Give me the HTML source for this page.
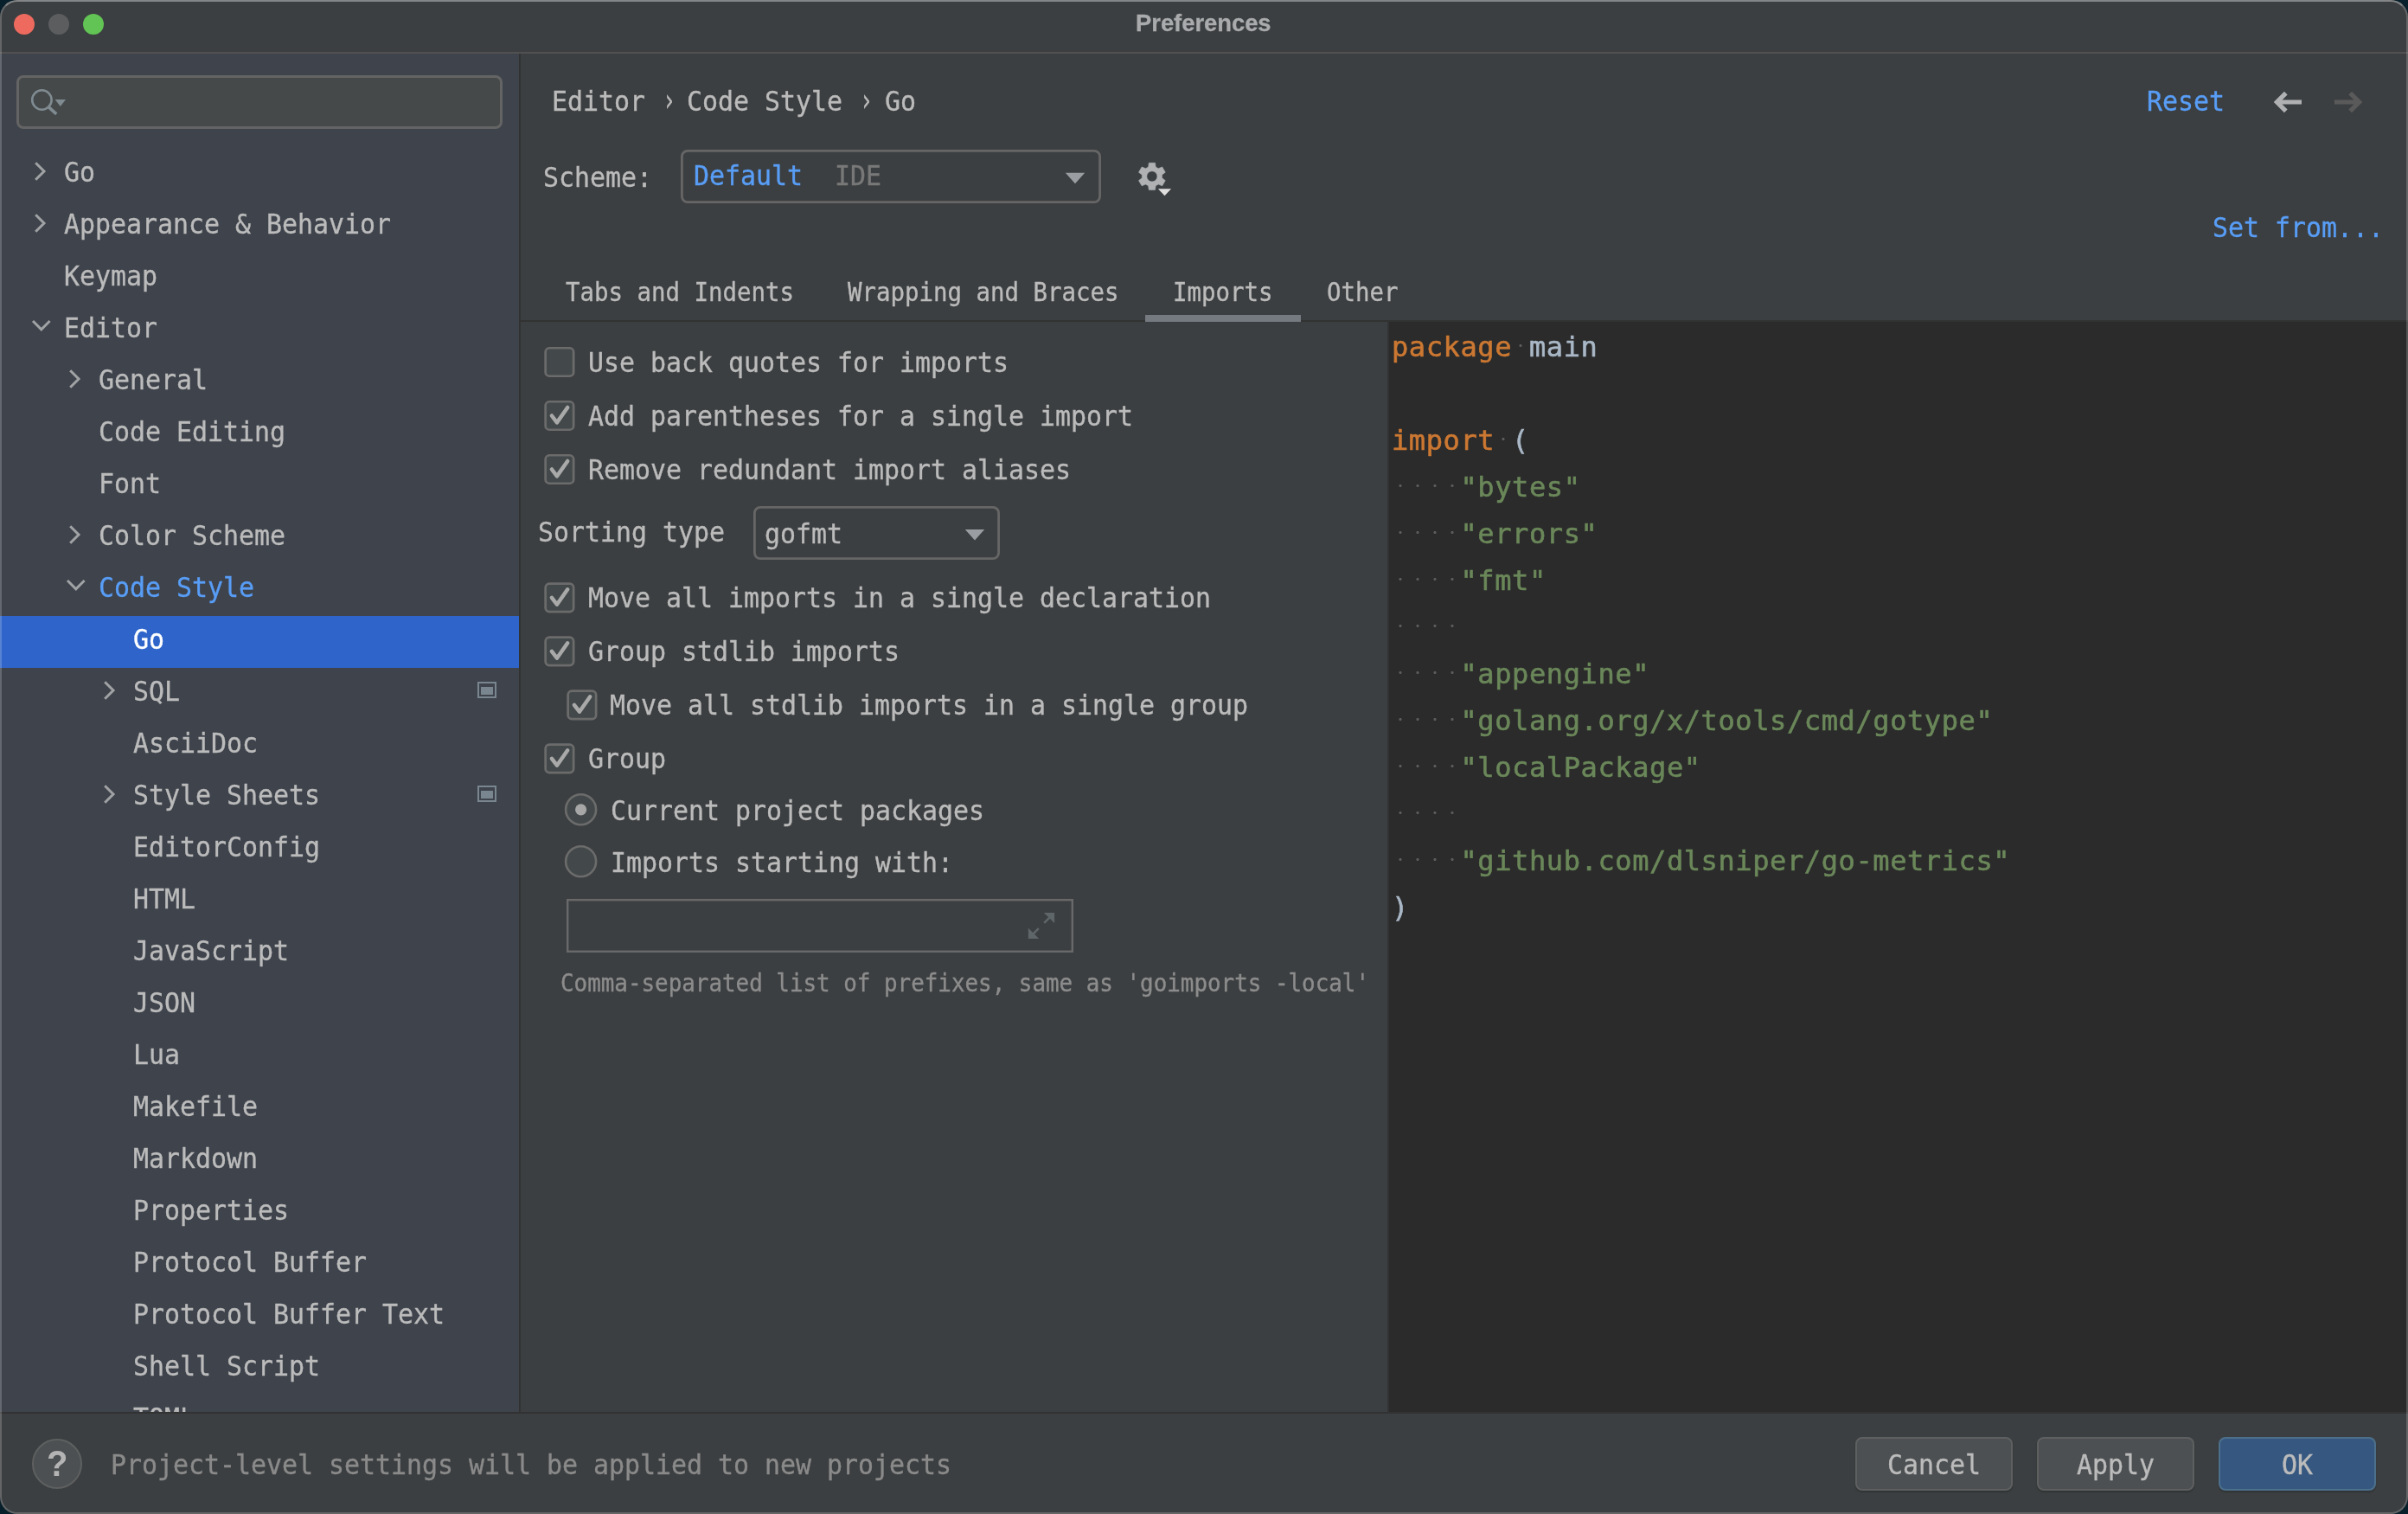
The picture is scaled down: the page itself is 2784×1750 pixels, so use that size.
<!DOCTYPE html>
<html lang="en"><head><meta charset="utf-8"><title>Preferences</title>
<style>
html,body{margin:0;padding:0;}
body{width:2784px;height:1750px;overflow:hidden;background:#08202b;position:relative;}
#win{will-change:transform;position:absolute;left:0;top:0;width:2784px;height:1750px;border-radius:20px;overflow:hidden;background:#3c3f41;}
#frame{position:absolute;left:0;top:0;width:2780px;height:1746px;border-radius:20px;border:2px solid rgba(255,255,255,.2);border-top-color:rgba(255,255,255,.37);border-bottom-color:rgba(255,255,255,.2);pointer-events:none;z-index:50;}
.abs{position:absolute;}
.u,.c{-webkit-text-stroke:0.35px currentColor;position:absolute;white-space:pre;line-height:1;transform-origin:0 0;font-family:"DejaVu Sans Mono","Liberation Mono",monospace;}
.c{transform:none;-webkit-text-stroke:0.6px currentColor;}
#title{position:absolute;left:0;top:0;width:2784px;height:60px;background:#3c3f41;}
#tsep{position:absolute;left:0;top:60px;width:2784px;height:2px;background:#515151;}
#side{position:absolute;left:0;top:62px;width:600px;height:1570px;background:#3e434c;overflow:hidden;}
#sdiv{position:absolute;left:600px;top:62px;width:2px;height:1570px;background:#323232;}
#code{position:absolute;left:1604px;top:372px;width:1180px;height:1260px;background:#2b2b2b;overflow:hidden;}
#bdiv{position:absolute;left:0;top:1632px;width:2784px;height:2px;background:#323232;}
.cb{position:absolute;width:29px;height:29px;border:3px solid #696969;border-radius:6px;background:#43494a;}
.rb{position:absolute;width:31.6px;height:31.6px;border:3px solid #696969;border-radius:50%;background:#43494a;}
.btn{position:absolute;top:1661px;width:178px;height:58px;border:2px solid #5e6060;border-radius:8px;background:#4c5052;box-shadow:0 2px 2px rgba(0,0,0,.18);}
.ws{color:transparent;background:radial-gradient(circle at 50% 46%,#5c5c5c 1.1px,rgba(92,92,92,0) 2px);}
</style></head><body>
<div id="win">
<div id="title"></div><div id="tsep"></div>

<div class="abs" style="left:15.8px;top:15.8px;width:24.2px;height:24.2px;border-radius:50%;background:#ee6a5e"></div>
<div class="abs" style="left:55.8px;top:15.8px;width:24.2px;height:24.2px;border-radius:50%;background:#5b5d5f"></div>
<div class="abs" style="left:95.9px;top:15.8px;width:24.2px;height:24.2px;border-radius:50%;background:#61c454"></div>
<span id="ttl" class="abs" style="left:1312.5px;top:11px;font:bold 27.6px/32px 'Liberation Sans',sans-serif;color:#a9abad;white-space:pre;transform-origin:0 0;transform:scaleX(.991);-webkit-text-stroke:.3px #a9abad;">Preferences</span>
<div id="side">
<div class="abs" style="left:19px;top:25px;width:556px;height:56px;border:3px solid #646464;border-radius:8px;background:#45494a"></div>
<svg class="abs" style="left:30px;top:36px" width="60" height="40" viewBox="30 98 60 40"><circle cx="48.4" cy="115.5" r="11.2" fill="none" stroke="#7f8b91" stroke-width="2.6"/><path d="M56.4 123.9L65.2 131.9" stroke="#7f8b91" stroke-width="3.6" fill="none"/><path d="M63.6 114.9h12.4l-6.2 8.1z" fill="#7f8b91"/></svg>
<span class="u" style="left:74.0px;top:121.4px;font-size:32.0px;color:#bbbbbb;transform:scaleX(0.9343);">Go</span>
<svg class="abs" style="left:36px;top:120px" width="24" height="32" viewBox="-4 -16 24 32"><path d="M1.2 -9.8L11 0L1.2 9.8" fill="none" stroke="#a0a2a4" stroke-width="3"/></svg>
<span class="u" style="left:74.0px;top:181.4px;font-size:32.0px;color:#bbbbbb;transform:scaleX(0.9343);">Appearance &amp; Behavior</span>
<svg class="abs" style="left:36px;top:180px" width="24" height="32" viewBox="-4 -16 24 32"><path d="M1.2 -9.8L11 0L1.2 9.8" fill="none" stroke="#a0a2a4" stroke-width="3"/></svg>
<span class="u" style="left:74.0px;top:241.4px;font-size:32.0px;color:#bbbbbb;transform:scaleX(0.9343);">Keymap</span>
<span class="u" style="left:74.0px;top:301.4px;font-size:32.0px;color:#bbbbbb;transform:scaleX(0.9343);">Editor</span>
<svg class="abs" style="left:32px;top:302px" width="32" height="24" viewBox="-8 -12 32 24"><path d="M-2 -5L7.8 4.8L17.6 -5" fill="none" stroke="#a0a2a4" stroke-width="3"/></svg>
<span class="u" style="left:114.0px;top:361.4px;font-size:32.0px;color:#bbbbbb;transform:scaleX(0.9343);">General</span>
<svg class="abs" style="left:76px;top:360px" width="24" height="32" viewBox="-4 -16 24 32"><path d="M1.2 -9.8L11 0L1.2 9.8" fill="none" stroke="#a0a2a4" stroke-width="3"/></svg>
<span class="u" style="left:114.0px;top:421.4px;font-size:32.0px;color:#bbbbbb;transform:scaleX(0.9343);">Code Editing</span>
<span class="u" style="left:114.0px;top:481.4px;font-size:32.0px;color:#bbbbbb;transform:scaleX(0.9343);">Font</span>
<span class="u" style="left:114.0px;top:541.4px;font-size:32.0px;color:#bbbbbb;transform:scaleX(0.9343);">Color Scheme</span>
<svg class="abs" style="left:76px;top:540px" width="24" height="32" viewBox="-4 -16 24 32"><path d="M1.2 -9.8L11 0L1.2 9.8" fill="none" stroke="#a0a2a4" stroke-width="3"/></svg>
<span class="u" style="left:114.0px;top:601.4px;font-size:32.0px;color:#589df6;transform:scaleX(0.9343);">Code Style</span>
<svg class="abs" style="left:72px;top:602px" width="32" height="24" viewBox="-8 -12 32 24"><path d="M-2 -5L7.8 4.8L17.6 -5" fill="none" stroke="#a0a2a4" stroke-width="3"/></svg>
<div class="abs" style="left:0;top:650px;width:600px;height:60px;background:#2f65ca"></div>
<span class="u" style="left:154.0px;top:661.4px;font-size:32.0px;color:#ffffff;transform:scaleX(0.9343);">Go</span>
<span class="u" style="left:154.0px;top:721.4px;font-size:32.0px;color:#bbbbbb;transform:scaleX(0.9343);">SQL</span>
<svg class="abs" style="left:116px;top:720px" width="24" height="32" viewBox="-4 -16 24 32"><path d="M1.2 -9.8L11 0L1.2 9.8" fill="none" stroke="#a0a2a4" stroke-width="3"/></svg>
<div class="abs" style="left:552px;top:726px;width:18px;height:15px;border:2px solid #7a868f;"><div class="abs" style="left:2px;top:4px;width:14px;height:9px;background:#7a868f"></div></div>
<span class="u" style="left:154.0px;top:781.4px;font-size:32.0px;color:#bbbbbb;transform:scaleX(0.9343);">AsciiDoc</span>
<span class="u" style="left:154.0px;top:841.4px;font-size:32.0px;color:#bbbbbb;transform:scaleX(0.9343);">Style Sheets</span>
<svg class="abs" style="left:116px;top:840px" width="24" height="32" viewBox="-4 -16 24 32"><path d="M1.2 -9.8L11 0L1.2 9.8" fill="none" stroke="#a0a2a4" stroke-width="3"/></svg>
<div class="abs" style="left:552px;top:846px;width:18px;height:15px;border:2px solid #7a868f;"><div class="abs" style="left:2px;top:4px;width:14px;height:9px;background:#7a868f"></div></div>
<span class="u" style="left:154.0px;top:901.4px;font-size:32.0px;color:#bbbbbb;transform:scaleX(0.9343);">EditorConfig</span>
<span class="u" style="left:154.0px;top:961.4px;font-size:32.0px;color:#bbbbbb;transform:scaleX(0.9343);">HTML</span>
<span class="u" style="left:154.0px;top:1021.4px;font-size:32.0px;color:#bbbbbb;transform:scaleX(0.9343);">JavaScript</span>
<span class="u" style="left:154.0px;top:1081.4px;font-size:32.0px;color:#bbbbbb;transform:scaleX(0.9343);">JSON</span>
<span class="u" style="left:154.0px;top:1141.4px;font-size:32.0px;color:#bbbbbb;transform:scaleX(0.9343);">Lua</span>
<span class="u" style="left:154.0px;top:1201.4px;font-size:32.0px;color:#bbbbbb;transform:scaleX(0.9343);">Makefile</span>
<span class="u" style="left:154.0px;top:1261.4px;font-size:32.0px;color:#bbbbbb;transform:scaleX(0.9343);">Markdown</span>
<span class="u" style="left:154.0px;top:1321.4px;font-size:32.0px;color:#bbbbbb;transform:scaleX(0.9343);">Properties</span>
<span class="u" style="left:154.0px;top:1381.4px;font-size:32.0px;color:#bbbbbb;transform:scaleX(0.9343);">Protocol Buffer</span>
<span class="u" style="left:154.0px;top:1441.4px;font-size:32.0px;color:#bbbbbb;transform:scaleX(0.9343);">Protocol Buffer Text</span>
<span class="u" style="left:154.0px;top:1501.4px;font-size:32.0px;color:#bbbbbb;transform:scaleX(0.9343);">Shell Script</span>
<span class="u" style="left:154.0px;top:1561.4px;font-size:32.0px;color:#bbbbbb;transform:scaleX(0.9343);">TOML</span>
</div><div id="sdiv"></div>
<span class="u" style="left:637.5px;top:101.1px;font-size:32.0px;color:#bbbbbb;transform:scaleX(0.9343);">Editor</span>
<span class="u" style="left:766.0px;top:98.1px;font-size:35.88px;color:#bbbbbb;transform:scaleX(0.7013);">›</span>
<span class="u" style="left:794.0px;top:101.1px;font-size:32.0px;color:#bbbbbb;transform:scaleX(0.9343);">Code Style</span>
<span class="u" style="left:993.5px;top:98.1px;font-size:35.88px;color:#bbbbbb;transform:scaleX(0.7013);">›</span>
<span class="u" style="left:1022.5px;top:101.1px;font-size:32.0px;color:#bbbbbb;transform:scaleX(0.9343);">Go</span>
<span class="u" style="left:2482.0px;top:101.1px;font-size:32.0px;color:#589df6;transform:scaleX(0.9343);">Reset</span>
<svg class="abs" style="left:2620px;top:100px" width="120" height="36" viewBox="2620 100 120 36"><path d="M2661 118H2633M2642.8 107.6L2632.4 118L2642.8 128.4" fill="none" stroke="#afb1b3" stroke-width="5.2"/><path d="M2699 118H2727M2717.2 107.6L2727.6 118L2717.2 128.4" fill="none" stroke="#5a5a5a" stroke-width="5.2"/></svg>
<span class="u" style="left:628.0px;top:189.4px;font-size:32.0px;color:#bbbbbb;transform:scaleX(0.9343);">Scheme:</span>
<span class="u" style="left:801.5px;top:186.9px;font-size:32.0px;color:#589df6;transform:scaleX(0.9343);">Default</span>
<span class="u" style="left:964.5px;top:186.9px;font-size:32.0px;color:#787878;transform:scaleX(0.9343);">IDE</span>
<svg class="abs" style="left:1228px;top:196px" width="30" height="20" viewBox="1228 196 30 20"><path d="M1231.8 199.8H1254.2L1243 212.2z" fill="#9a9da1"/></svg>
<svg class="abs" style="left:1310px;top:182px" width="50" height="50" viewBox="1310 182 50 50"><path d="M1327.67 192.99L1328.31 188.21L1335.49 188.21L1336.13 192.99L1339.23 194.78L1343.70 192.94L1347.29 199.16L1343.46 202.11L1343.46 205.69L1347.29 208.64L1343.70 214.86L1339.23 213.02L1336.13 214.81L1335.49 219.59L1328.31 219.59L1327.67 214.81L1324.57 213.02L1320.10 214.86L1316.51 208.64L1320.34 205.69L1320.34 202.11L1316.51 199.16L1320.10 192.94L1324.57 194.78ZM1338.00 203.90A6.1 6.1 0 1 0 1325.80 203.90A6.1 6.1 0 1 0 1338.00 203.90Z" fill="#afb1b3" fill-rule="evenodd" stroke="#afb1b3" stroke-width="0.6" stroke-linejoin="round"/><path d="M1338.9 218.2H1354.1L1346.5 226.2z" fill="#dedede"/></svg>
<span class="u" style="left:2557.5px;top:247.4px;font-size:32.0px;color:#589df6;transform:scaleX(0.9343);">Set from...</span>
<span class="u" style="left:654.0px;top:324.2px;font-size:29.33px;color:#bbbbbb;transform:scaleX(0.9343);">Tabs and Indents</span>
<span class="u" style="left:979.5px;top:324.2px;font-size:29.33px;color:#bbbbbb;transform:scaleX(0.9343);">Wrapping and Braces</span>
<span class="u" style="left:1355.5px;top:324.2px;font-size:29.33px;color:#bbbbbb;transform:scaleX(0.9343);">Imports</span>
<span class="u" style="left:1533.5px;top:324.2px;font-size:29.33px;color:#bbbbbb;transform:scaleX(0.9343);">Other</span>
<div class="abs" style="left:602px;top:370px;width:2182px;height:2px;background:#323232"></div>
<div class="abs" style="left:1324px;top:364px;width:180px;height:8px;background:#747a80"></div>
<span class="u" style="left:679.5px;top:403.4px;font-size:32.0px;color:#bbbbbb;transform:scaleX(0.9343);">Use back quotes for imports</span>
<span class="u" style="left:679.5px;top:465.4px;font-size:32.0px;color:#bbbbbb;transform:scaleX(0.9343);">Add parentheses for a single import</span>
<span class="u" style="left:679.5px;top:527.4px;font-size:32.0px;color:#bbbbbb;transform:scaleX(0.9343);">Remove redundant import aliases</span>
<span class="u" style="left:622.0px;top:599.1px;font-size:32.0px;color:#bbbbbb;transform:scaleX(0.9343);">Sorting type</span>
<span class="u" style="left:884.0px;top:600.9px;font-size:32.0px;color:#bbbbbb;transform:scaleX(0.9343);">gofmt</span>
<span class="u" style="left:679.5px;top:674.9px;font-size:32.0px;color:#bbbbbb;transform:scaleX(0.9343);">Move all imports in a single declaration</span>
<span class="u" style="left:679.5px;top:736.9px;font-size:32.0px;color:#bbbbbb;transform:scaleX(0.9343);">Group stdlib imports</span>
<span class="u" style="left:705.0px;top:798.9px;font-size:32.0px;color:#bbbbbb;transform:scaleX(0.9343);">Move all stdlib imports in a single group</span>
<span class="u" style="left:679.5px;top:860.9px;font-size:32.0px;color:#bbbbbb;transform:scaleX(0.9343);">Group</span>
<span class="u" style="left:706.0px;top:921.0px;font-size:32.0px;color:#bbbbbb;transform:scaleX(0.9343);">Current project packages</span>
<span class="u" style="left:706.0px;top:981.0px;font-size:32.0px;color:#bbbbbb;transform:scaleX(0.9343);">Imports starting with:</span>
<svg class="abs" style="left:1186px;top:1052px" width="38" height="38" viewBox="1186 1052 38 38"><g fill="#5e6669" stroke="none"><path d="M1206.8 1054.9H1219.1V1067.1Z"/><path d="M1188.9 1072.7V1085H1201.2Z"/></g><g fill="none" stroke="#5e6669" stroke-width="2.5"><path d="M1207.2 1066.8L1214 1060"/><path d="M1200.8 1073.2L1194 1080"/></g></svg>
<span class="u" style="left:647.5px;top:1123.1px;font-size:27.71px;color:#8c8c8c;transform:scaleX(0.9343);">Comma-separated list of prefixes, same as 'goimports -local'</span>
<div id="code"><div class="abs" style="left:0;top:0;width:2px;height:1260px;background:#313335"></div>
<span class="c" style="left:5px;top:12.9px;font-size:32px;letter-spacing:0.6px;"><span style="color:#cc7832">package</span><span class="ws"> </span><span style="color:#a9b7c6">main</span></span>
<span class="c" style="left:5px;top:120.9px;font-size:32px;letter-spacing:0.6px;"><span style="color:#cc7832">import</span><span class="ws"> </span><span style="color:#a9b7c6">(</span></span>
<span class="c" style="left:5px;top:174.9px;font-size:32px;letter-spacing:0.6px;"><span class="ws"> </span><span class="ws"> </span><span class="ws"> </span><span class="ws"> </span><span style="color:#6a8759">"bytes"</span></span>
<span class="c" style="left:5px;top:228.9px;font-size:32px;letter-spacing:0.6px;"><span class="ws"> </span><span class="ws"> </span><span class="ws"> </span><span class="ws"> </span><span style="color:#6a8759">"errors"</span></span>
<span class="c" style="left:5px;top:282.9px;font-size:32px;letter-spacing:0.6px;"><span class="ws"> </span><span class="ws"> </span><span class="ws"> </span><span class="ws"> </span><span style="color:#6a8759">"fmt"</span></span>
<span class="c" style="left:5px;top:336.9px;font-size:32px;letter-spacing:0.6px;"><span class="ws"> </span><span class="ws"> </span><span class="ws"> </span><span class="ws"> </span></span>
<span class="c" style="left:5px;top:390.9px;font-size:32px;letter-spacing:0.6px;"><span class="ws"> </span><span class="ws"> </span><span class="ws"> </span><span class="ws"> </span><span style="color:#6a8759">"appengine"</span></span>
<span class="c" style="left:5px;top:444.9px;font-size:32px;letter-spacing:0.6px;"><span class="ws"> </span><span class="ws"> </span><span class="ws"> </span><span class="ws"> </span><span style="color:#6a8759">"golang.org/x/tools/cmd/gotype"</span></span>
<span class="c" style="left:5px;top:498.9px;font-size:32px;letter-spacing:0.6px;"><span class="ws"> </span><span class="ws"> </span><span class="ws"> </span><span class="ws"> </span><span style="color:#6a8759">"localPackage"</span></span>
<span class="c" style="left:5px;top:552.9px;font-size:32px;letter-spacing:0.6px;"><span class="ws"> </span><span class="ws"> </span><span class="ws"> </span><span class="ws"> </span></span>
<span class="c" style="left:5px;top:606.9px;font-size:32px;letter-spacing:0.6px;"><span class="ws"> </span><span class="ws"> </span><span class="ws"> </span><span class="ws"> </span><span style="color:#6a8759">"github.com/dlsniper/go-metrics"</span></span>
<span class="c" style="left:5px;top:660.9px;font-size:32px;letter-spacing:0.6px;"><span style="color:#a9b7c6">)</span></span>
</div>
<div id="bdiv"></div>
<div class="abs" style="left:37px;top:1663px;width:54px;height:54px;border:2px solid #5e6060;border-radius:50%;background:#4c5052"></div>
<span class="abs" style="left:53.6px;top:1668.3px;font:bold 42.5px/48px 'Liberation Sans',sans-serif;color:#b4b4b4;transform-origin:0 0;transform:scaleX(.94);">?</span>
<span class="u" style="left:127.5px;top:1676.9px;font-size:32.0px;color:#8a8a8a;transform:scaleX(0.9343);">Project-level settings will be applied to new projects</span>
<div class="btn" style="left:2145px"></div>
<div class="btn" style="left:2355px"></div>
<div class="btn" style="left:2565px;background:#365880;border-color:#4c708c"></div>
<span class="u" style="left:2181.5px;top:1677.2px;font-size:32.0px;color:#bbbbbb;transform:scaleX(0.9343);">Cancel</span>
<span class="u" style="left:2400.5px;top:1677.2px;font-size:32.0px;color:#bbbbbb;transform:scaleX(0.9343);">Apply</span>
<span class="u" style="left:2637.5px;top:1677.2px;font-size:32.0px;color:#bbbbbb;transform:scaleX(0.9343);">OK</span>
<svg class="abs" style="left:0;top:0;pointer-events:none" width="2784" height="1750" viewBox="0 0 2784 1750"><rect x="788.4" y="174.4" width="483.2" height="59.2" rx="6.6" fill="none" stroke="#666666" stroke-width="2.8"/><rect x="630.65" y="402.25" width="32.5" height="32.5" rx="4.6" fill="#43494a" stroke="#6b6b6b" stroke-width="2.7"/><rect x="630.65" y="464.25" width="32.5" height="32.5" rx="4.6" fill="#43494a" stroke="#6b6b6b" stroke-width="2.7"/><path d="M637.9 480.5l6 7.9l12.3 -17.4" fill="none" stroke="#a9a9a9" stroke-width="4.5" stroke-linecap="round" stroke-linejoin="round"/><rect x="630.65" y="526.25" width="32.5" height="32.5" rx="4.6" fill="#43494a" stroke="#6b6b6b" stroke-width="2.7"/><path d="M637.9 542.5l6 7.9l12.3 -17.4" fill="none" stroke="#a9a9a9" stroke-width="4.5" stroke-linecap="round" stroke-linejoin="round"/><rect x="872.4" y="586.4" width="282.2" height="59.2" rx="6.6" fill="none" stroke="#666666" stroke-width="2.8"/><path d="M1115.8 612H1138.2L1127 624.4z" fill="#9a9da1"/><rect x="630.65" y="674.55" width="32.5" height="32.5" rx="4.6" fill="#43494a" stroke="#6b6b6b" stroke-width="2.7"/><path d="M637.9 690.8l6 7.9l12.3 -17.4" fill="none" stroke="#a9a9a9" stroke-width="4.5" stroke-linecap="round" stroke-linejoin="round"/><rect x="630.65" y="736.55" width="32.5" height="32.5" rx="4.6" fill="#43494a" stroke="#6b6b6b" stroke-width="2.7"/><path d="M637.9 752.8l6 7.9l12.3 -17.4" fill="none" stroke="#a9a9a9" stroke-width="4.5" stroke-linecap="round" stroke-linejoin="round"/><rect x="656.65" y="798.55" width="32.5" height="32.5" rx="4.6" fill="#43494a" stroke="#6b6b6b" stroke-width="2.7"/><path d="M663.9 814.8l6 7.9l12.3 -17.4" fill="none" stroke="#a9a9a9" stroke-width="4.5" stroke-linecap="round" stroke-linejoin="round"/><rect x="630.65" y="860.55" width="32.5" height="32.5" rx="4.6" fill="#43494a" stroke="#6b6b6b" stroke-width="2.7"/><path d="M637.9 876.8l6 7.9l12.3 -17.4" fill="none" stroke="#a9a9a9" stroke-width="4.5" stroke-linecap="round" stroke-linejoin="round"/><circle cx="671.6" cy="935.8" r="17.5" fill="#43494a" stroke="#6b6b6b" stroke-width="2.6"/><circle cx="671.6" cy="935.8" r="6.6" fill="#a7a7a7"/><circle cx="671.6" cy="995.8" r="17.5" fill="#43494a" stroke="#6b6b6b" stroke-width="2.6"/><rect x="656.2" y="1040.2" width="583.6" height="59.6" fill="none" stroke="#696969" stroke-width="2.4"/></svg>
</div><div id="frame"></div>
</body></html>
